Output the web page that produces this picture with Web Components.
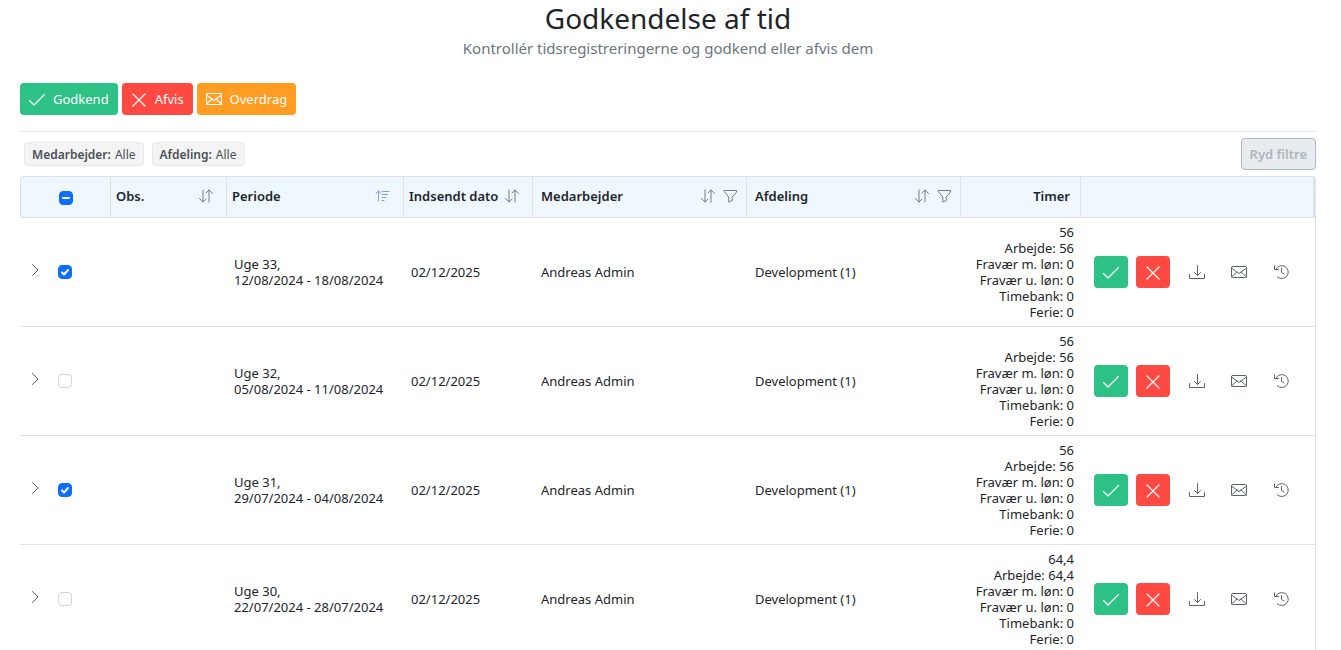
<!DOCTYPE html>
<html lang="da">
<head>
<meta charset="utf-8">
<title>Godkendelse af tid</title>
<style>
   body {
      margin: 0;
      font-family: "Noto Sans", "Open Sans", sans-serif;
      font-size: 13px;
      line-height: 16px;
      color: #212529;
      background: #fff;
   }
</style>
</head>
<body>
<time-approval>
   <span slot="title">Godkendelse af tid</span>
   <span slot="subtitle">Kontrollér tidsregistreringerne og godkend eller afvis dem</span>

   <action-button slot="actions" kind="approve" icon="check">Godkend</action-button>
   <action-button slot="actions" kind="reject" icon="cross">Afvis</action-button>
   <action-button slot="actions" kind="forward" icon="mail">Overdrag</action-button>

   <filter-chip slot="filters" label="Medarbejder:">Alle</filter-chip>
   <filter-chip slot="filters" label="Afdeling:">Alle</filter-chip>

   <approval-table></approval-table>
</time-approval>

<script>
const icons = {
   check: '<path d="M.5 9.5 L5 14 L15.5 3.5"/>',
   cross: '<path d="M2 3 L14 15 M14 3 L2 15"/>',
   mail: '<rect x=".5" y="2.5" width="15" height="11" rx="1"/><path d="M.5 4 L8 9.5 L15.5 4 M.5 13 L6 8 M15.5 13 L10 8"/>',
   sort: '<path d="M5 2 V14 M1.5 10.5 L5 14 L8 11 M11 14 V2 M8 5 L11 2 L14.5 5.5"/>',
   sorted: '<path d="M3.5 13 V3 M1 5.5 L3.5 3 L6 5.5 M7 3.5 H14 M7 6.5 H12.5 M7 9.5 H11 M7 12.5 H9"/>',
   filter: '<path d="M2.5 2.5 H14.5 V4 L10.2 9 V12.5 L6.8 14 V9 L2.5 4 Z"/>',
   chevron: '<path d="M5.5 2.5 L11 8 L5.5 13.5"/>',
   download: '<path d="M.5 10.5 V14.5 H15.5 V10.5 M8.5 1.5 V11.5 M5.5 8.5 L8.5 11.5 L11.5 8.5"/>',
   history: '<path d="M3 5 A6.5 6.5 0 1 1 4.5 13 M1.5 2 V5.5 H5.5 M8.5 4.5 V8.5 L11 10"/>'
}

class AppIcon extends HTMLElement {
   static observedAttributes = ["name"]

   constructor(){
      super()
      this.attachShadow({ mode: "open" })
      this.shadowRoot.innerHTML = `
         <style>
            :host {
               display: inline-flex;
               flex: none;
               width: 16px;
               height: 16px;
            }
            svg {
               width: 100%;
               height: 100%;
               fill: none;
               stroke: currentColor;
               stroke-width: var(--icon-stroke, 1);
               stroke-linecap: round;
               stroke-linejoin: round;
            }
         </style>
         <svg viewBox="0 0 16 16" aria-hidden="true"></svg>
      `
   }

   attributeChangedCallback(){
      this.shadowRoot.querySelector("svg").innerHTML = icons[this.getAttribute("name")] || ""
   }
}
customElements.define("app-icon", AppIcon)

const buttonTemplate = document.createElement("template")
buttonTemplate.innerHTML = `
   <style>
      :host {
         display: inline-flex;
      }
      button {
         display: flex;
         align-items: center;
         justify-content: center;
         gap: 8px;
         height: 32px;
         padding: 0 9px;
         border: 0;
         border-radius: 4px;
         font: inherit;
         color: #fff;
         background: var(--button-color, transparent);
         cursor: pointer;
         --icon-stroke: 1.2;
      }
      :host([kind="approve"]) {
         --button-color: #2dc185;
      }
      :host([kind="reject"]) {
         --button-color: #ff4943;
      }
      :host([kind="forward"]) {
         --button-color: #ff9c22;
      }
      :host([compact]) button {
         width: 34px;
         padding: 0;
      }
      :host([kind="plain"]) button {
         width: 38px;
         color: #5c636a;
         --icon-stroke: 1;
      }
      button:hover {
         filter: brightness(0.95);
      }
   </style>
   <button type="button"><app-icon></app-icon><slot></slot></button>
`

class ActionButton extends HTMLElement {
   constructor(){
      super()
      this.attachShadow({ mode: "open" })
      this.shadowRoot.appendChild(buttonTemplate.content.cloneNode(true))
   }

   connectedCallback(){
      this.shadowRoot.querySelector("app-icon").setAttribute("name", this.getAttribute("icon"))
      if(this.title){
         this.shadowRoot.querySelector("button").setAttribute("aria-label", this.title)
      }
   }
}
customElements.define("action-button", ActionButton)

class FilterChip extends HTMLElement {
   constructor(){
      super()
      this.attachShadow({ mode: "open" })
      this.shadowRoot.innerHTML = `
         <style>
            :host {
               display: inline-flex;
               align-items: center;
               gap: 4px;
               box-sizing: border-box;
               height: 24px;
               padding: 1px 7px 0;
               border: 1px solid #e9e9e9;
               border-radius: 4px;
               background: #f4f4f4;
               color: #495057;
               font-size: 12px;
            }
            b {
               font-weight: 600;
            }
         </style>
         <b></b><slot></slot>
      `
   }

   connectedCallback(){
      this.shadowRoot.querySelector("b").textContent = this.getAttribute("label")
   }
}
customElements.define("filter-chip", FilterChip)

const columns = [
   { name: "Obs.", tools: ["sort"] },
   { name: "Periode", tools: ["sorted"] },
   { name: "Indsendt dato", tools: ["sort"] },
   { name: "Medarbejder", tools: ["sort", "filter"], wide: true },
   { name: "Afdeling", tools: ["sort", "filter"], wide: true }
]

const rows = [
   { week: 33, period: "12/08/2024 - 18/08/2024", hours: "56", checked: true },
   { week: 32, period: "05/08/2024 - 11/08/2024", hours: "56", checked: false },
   { week: 31, period: "29/07/2024 - 04/08/2024", hours: "56", checked: true },
   { week: 30, period: "22/07/2024 - 28/07/2024", hours: "64,4", checked: false }
]

const toolLabels = { sort: "Sortér", sorted: "Sorteret", filter: "Filtrér" }

class ApprovalTable extends HTMLElement {
   constructor(){
      super()
      this.attachShadow({ mode: "open" })
      this.shadowRoot.innerHTML = `
         <style>
            :host {
               display: block;
            }
            table {
               width: 100%;
               table-layout: fixed;
               border-collapse: separate;
               border-spacing: 0;
            }
            .select { width: 91px; }
            .obs { width: 116px; }
            .period { width: 177px; }
            .sent { width: 129px; }
            .hours { width: 120px; }
            .actions { width: 235px; }
            th {
               box-sizing: border-box;
               height: 42px;
               padding: 0 5px 2px;
               border: solid #dee2e6;
               border-width: 1px 1px 1px 0;
               background: #eff7ff;
               font-weight: 600;
               text-align: left;
            }
            th:first-child {
               padding: 2px 5px 0;
               border-left-width: 1px;
               border-top-left-radius: 4px;
            }
            th:last-child {
               border-right-width: 3px;
               border-top-right-radius: 4px;
            }
            th.wide, td.wide {
               padding-left: 8px;
               padding-right: 8px;
            }
            th.number {
               padding-right: 10px;
               text-align: right;
            }
            .head {
               display: flex;
               align-items: center;
               gap: 6px;
               white-space: nowrap;
            }
            .head span {
               flex: 1;
            }
            .head button {
               display: flex;
               padding: 0;
               border: 0;
               background: none;
               color: #747d85;
               cursor: pointer;
            }
            th:not(.wide) .head {
               padding-right: 7px;
            }
            .head button.sorted {
               color: #7f9cf5;
            }
            td {
               height: 96px;
               padding: 6px 7px;
               border-bottom: 1px solid #dee2e6;
            }
            td:last-child {
               border-right: 1px solid #dee2e6;
            }
            td.number {
               text-align: right;
            }
            .pick {
               display: flex;
               align-items: center;
               gap: 15px;
               color: #5c636a;
            }
            .pick button {
               display: flex;
               padding: 0 0 4px;
               border: 0;
               background: none;
               color: inherit;
            }
            th .pick {
               padding-left: 33px;
            }
            input {
               appearance: none;
               width: 14px;
               height: 14px;
               margin: 0;
               border: 1px solid #ced4da;
               border-radius: 4px;
               background: #fff center / 12px no-repeat;
            }
            input:checked, input:indeterminate {
               border-color: #0d6efd;
               background-color: #0d6efd;
            }
            input:checked {
               background-image: url("data:image/svg+xml,%3Csvg xmlns='http://www.w3.org/2000/svg' viewBox='0 0 12 12'%3E%3Cpath fill='none' stroke='white' stroke-width='2' stroke-linecap='round' stroke-linejoin='round' d='M3 6.5l2 2 4-4.5'/%3E%3C/svg%3E");
            }
            input:indeterminate {
               background-image: url("data:image/svg+xml,%3Csvg xmlns='http://www.w3.org/2000/svg' viewBox='0 0 12 12'%3E%3Cpath stroke='white' stroke-width='2' stroke-linecap='round' d='M3 6h6'/%3E%3C/svg%3E");
            }
            .buttons {
               display: flex;
               gap: 8px;
               padding-left: 6px;
            }
            .more {
               display: flex;
               gap: 4px;
            }
         </style>
         <table>
            <colgroup>
               <col class="select"><col class="obs"><col class="period"><col class="sent">
               <col><col><col class="hours"><col class="actions">
            </colgroup>
            <thead>
               <tr>
                  <th><div class="pick"><input type="checkbox" id="all" aria-label="Vælg alle"></div></th>
                  ${columns.map(c => this.Header(c)).join("")}
                  <th class="number">Timer</th>
                  <th></th>
               </tr>
            </thead>
            <tbody>${rows.map(r => this.Row(r)).join("")}</tbody>
         </table>
      `

      this.all = this.shadowRoot.querySelector("#all")
      this.boxes = [...this.shadowRoot.querySelectorAll("tbody input")]
      this.all.addEventListener("change", this.ToggleAll.bind(this))
      this.boxes.forEach(box => box.addEventListener("change", this.UpdateAll.bind(this)))
      this.UpdateAll()
   }

   Header(column){
      const tools = column.tools.map(t => `
         <button type="button" class="${t}" aria-label="${toolLabels[t]} ${column.name}"><app-icon name="${t}"></app-icon></button>
      `).join("")
      return `<th class="${column.wide ? "wide" : ""}"><div class="head"><span>${column.name}</span>${tools}</div></th>`
   }

   Row(row){
      return `
         <tr>
            <td>
               <div class="pick">
                  <button type="button" aria-label="Vis uge ${row.week}"><app-icon name="chevron"></app-icon></button>
                  <input type="checkbox" aria-label="Vælg uge ${row.week}" ${row.checked ? "checked" : ""}>
               </div>
            </td>
            <td></td>
            <td>Uge ${row.week},<br>${row.period}</td>
            <td>02/12/2025</td>
            <td class="wide">Andreas Admin</td>
            <td class="wide">Development (1)</td>
            <td class="number">${row.hours}<br>Arbejde: ${row.hours}<br>Fravær m. løn: 0<br>Fravær u. løn: 0<br>Timebank: 0<br>Ferie: 0</td>
            <td>
               <div class="buttons">
                  <action-button compact kind="approve" icon="check" title="Godkend"></action-button>
                  <action-button compact kind="reject" icon="cross" title="Afvis"></action-button>
                  <div class="more">
                     <action-button compact kind="plain" icon="download" title="Hent"></action-button>
                     <action-button compact kind="plain" icon="mail" title="Overdrag"></action-button>
                     <action-button compact kind="plain" icon="history" title="Historik"></action-button>
                  </div>
               </div>
            </td>
         </tr>
      `
   }

   ToggleAll(){
      this.boxes.forEach(box => box.checked = this.all.checked)
   }

   UpdateAll(){
      const count = this.boxes.filter(box => box.checked).length
      this.all.checked = count === this.boxes.length
      this.all.indeterminate = count > 0 && count < this.boxes.length
   }
}
customElements.define("approval-table", ApprovalTable)

class TimeApproval extends HTMLElement {
   constructor(){
      super()
      this.attachShadow({ mode: "open" })
      this.shadowRoot.innerHTML = `
         <style>
            :host {
               display: flex;
               flex-direction: column;
               box-sizing: border-box;
               height: 100vh;
               padding: 0 25px 0 20px;
            }
            header {
               text-align: center;
            }
            h1 {
               margin: 0;
               font-size: 28px;
               font-weight: 400;
               line-height: 36px;
            }
            p {
               margin: 0;
               font-size: 15px;
               line-height: 24px;
               color: #6c757d;
            }
            .actions {
               display: flex;
               gap: 4px;
               padding: 23px 0 16px;
               border-bottom: 1px solid #e6e8ea;
            }
            .filters {
               display: flex;
               align-items: center;
               gap: 8px;
               padding: 6px 0 6px 4px;
            }
            .clear {
               height: 32px;
               margin-left: auto;
               padding: 0 8px;
               border: 1px solid #adb5bd;
               border-radius: 4px;
               background: #e9ecef;
               color: #adb5bd;
               font: inherit;
               font-weight: 600;
            }
            main {
               flex: 1;
               min-height: 0;
               overflow: auto;
               scrollbar-width: none;
            }
         </style>
         <header>
            <h1><slot name="title"></slot></h1>
            <p><slot name="subtitle"></slot></p>
         </header>
         <div class="actions"><slot name="actions"></slot></div>
         <div class="filters">
            <slot name="filters"></slot>
            <button type="button" class="clear" disabled>Ryd filtre</button>
         </div>
         <main><slot></slot></main>
      `
   }
}
customElements.define("time-approval", TimeApproval)
</script>
</body>
</html>
